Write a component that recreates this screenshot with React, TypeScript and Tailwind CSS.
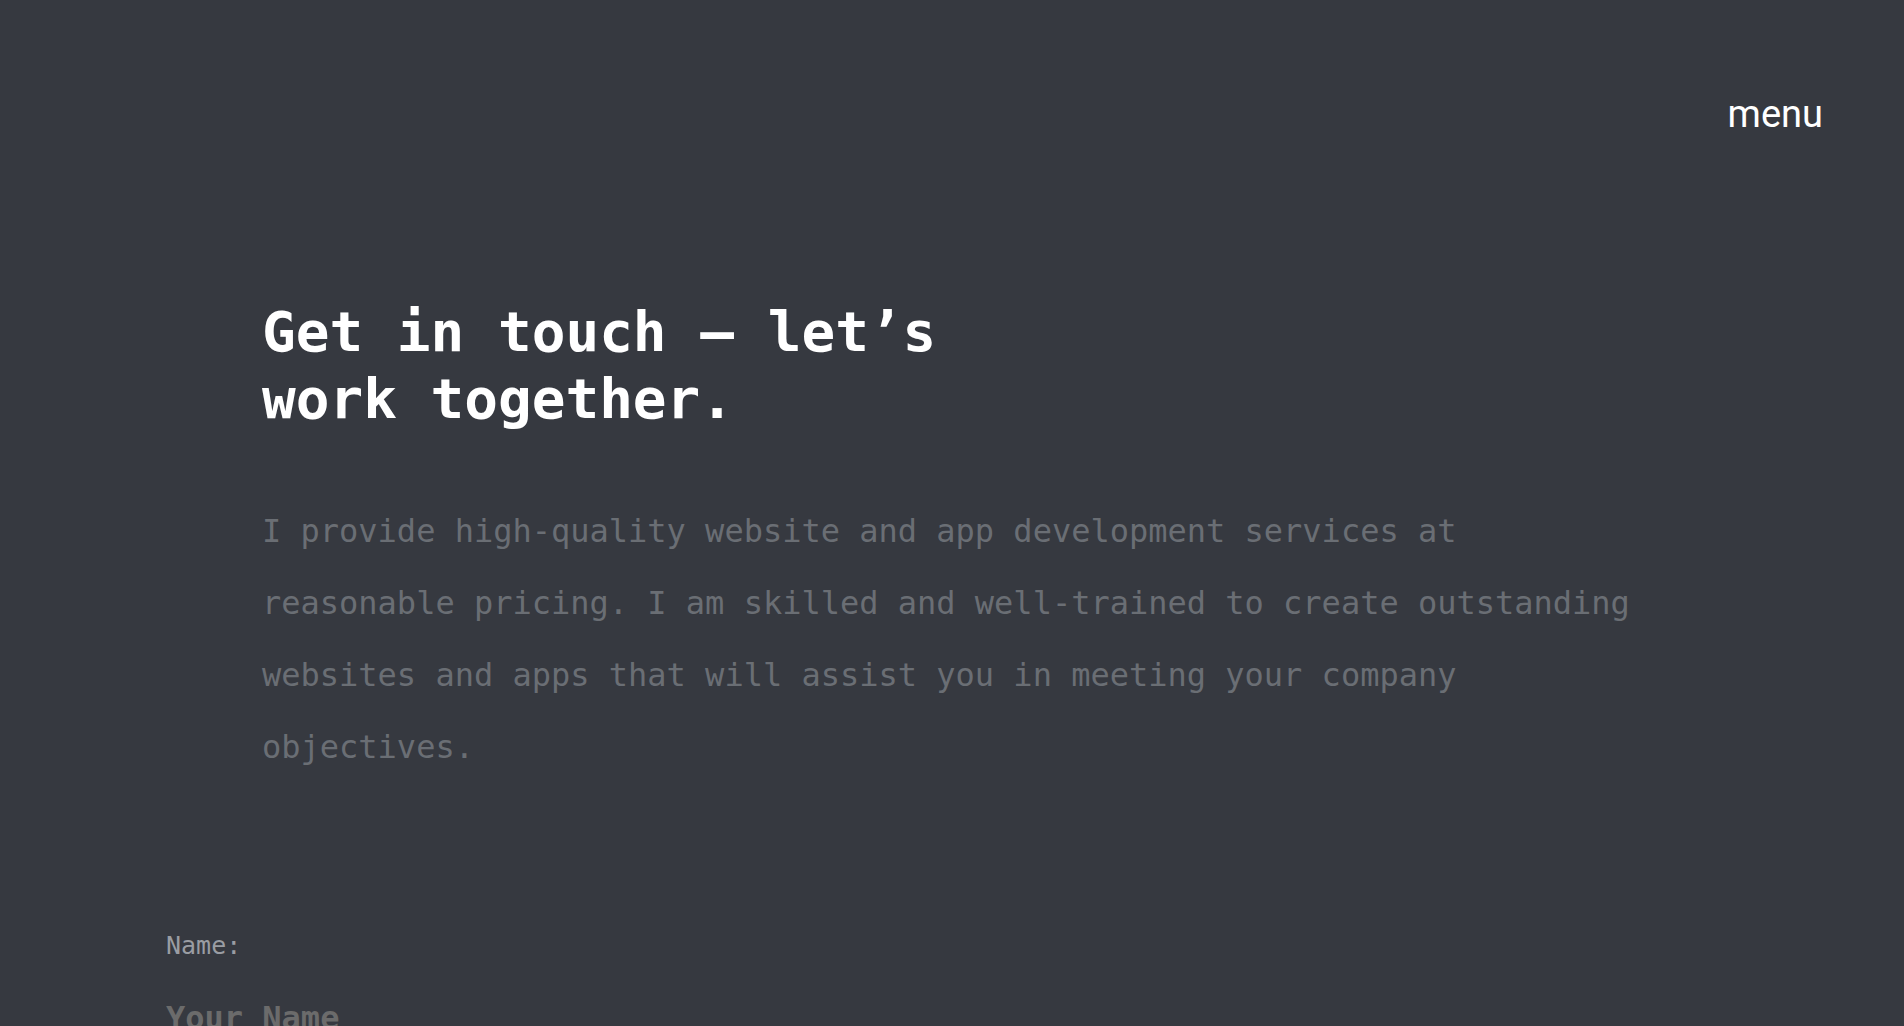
import React from "react";

export default function App() {
  return (
    <div className="min-h-screen w-full bg-[#363940] overflow-hidden">
      <header className="flex justify-end pt-[95px] pr-[81px]">
        <button
          className="text-white text-[38px] leading-none"
          style={{ fontFamily: "Roboto, 'Noto Sans', sans-serif" }}
        >
          menu
        </button>
      </header>

      <section
        className="pl-[262px] mt-[165px]"
        style={{ fontFamily: "'DejaVu Sans Mono', 'Liberation Mono', monospace" }}
      >
        <h1 className="text-white font-bold text-[56px] leading-[67px]">
          Get in touch — let’s
          <br />
          work together.
        </h1>
        <p className="mt-[63px] max-w-[1385px] text-[32px] leading-[72px] text-[#6a6e74] font-light">
          I provide high-quality website and app development services at reasonable pricing. I am skilled and well-trained to create outstanding websites and apps that will assist you in meeting your company objectives.
        </p>
      </section>

      <form
        className="pl-[166px] mt-[150px] flex flex-col"
        style={{ fontFamily: "'DejaVu Sans Mono', 'Liberation Mono', monospace" }}
      >
        <label htmlFor="name" className="text-[25px] leading-none text-[#9a9da3]">
          Name:
        </label>
        <input
          id="name"
          type="text"
          placeholder="Your Name"
          className="mt-[41px] w-[800px] bg-transparent outline-none border-0 p-0 text-[32px] leading-none font-bold text-white placeholder:text-[#6b6b6b]"
        />
      </form>
    </div>
  );
}
